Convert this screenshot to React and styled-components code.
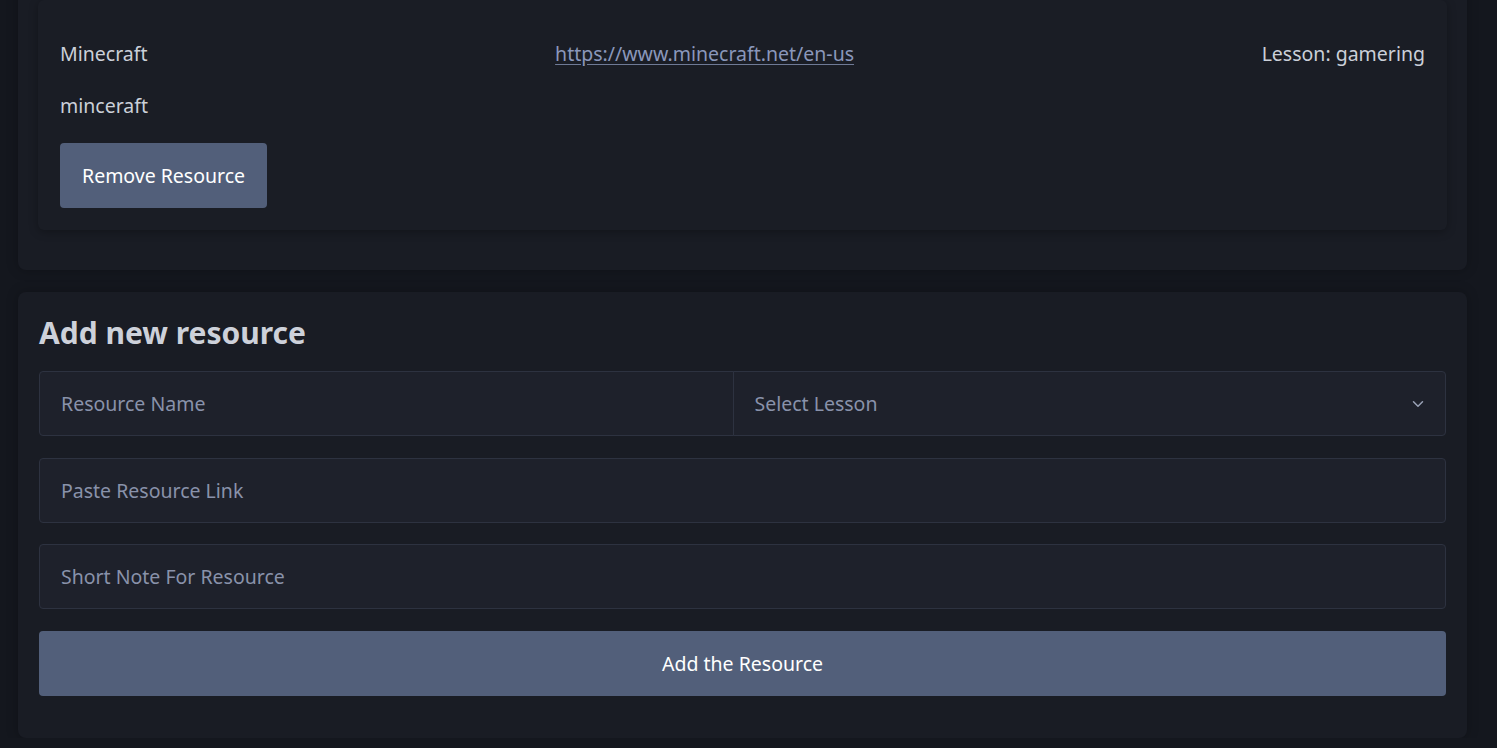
import React from 'react';
import styled, { createGlobalStyle } from 'styled-components';
import { FiChevronDown } from 'react-icons/fi';

const GlobalStyle = createGlobalStyle`
  html, body {
    margin: 0;
    background-color: #14171e;
    font-family: "Noto Sans", "Open Sans", sans-serif;
    overflow: hidden;
  }
`;

const Page = styled.div`
  display: flex;
  flex-direction: column;
  gap: 22px;
  padding: 0 30px 0 18px;
  margin-top: -20px;
`;

const Card = styled.section`
  background-color: #191c24;
  border-radius: 8px;
  padding: ${(p) => p.$padding};
  box-shadow: 0 0 12px rgba(0, 0, 0, 0.25);
`;

const ResourceItem = styled.div`
  display: flex;
  flex-direction: column;
  align-items: flex-start;
  gap: 22px;
  padding: 39px 22px 22px;
  border-radius: 6px;
  background-color: #1a1d25;
  box-shadow: 0 2px 10px rgba(0, 0, 0, 0.28);
`;

const ItemRow = styled.div`
  display: flex;
  justify-content: space-between;
  align-self: stretch;
  line-height: 30px;
`;

const Text = styled.span`
  color: #cbd0d9;
  font-size: 19.5px;
  line-height: 30px;
`;

const Link = styled.a`
  color: #8a97bb;
  font-size: 19.5px;
  text-decoration: underline;
  text-decoration-color: #6f7a96;
  text-underline-offset: 3px;
`;

const Button = styled.button`
  height: 65px;
  padding: 0 22px;
  border: none;
  border-radius: 4px;
  background-color: #525f7a;
  color: #ffffff;
  font-family: inherit;
  font-size: 19.5px;
  width: ${(p) => (p.$block ? '100%' : 'auto')};
  cursor: pointer;
`;

const Heading = styled.h2`
  margin: 0 0 18px;
  color: #cdd1da;
  font-size: 30px;
  font-weight: 700;
  line-height: 40px;
`;

const Form = styled.form`
  display: flex;
  flex-direction: column;
  gap: 21.5px;
`;

const InputGroup = styled.div`
  display: grid;
  grid-template-columns: 695fr 713fr;
`;

const Field = styled.div`
  position: relative;
  display: flex;
  align-items: center;
  height: 65px;
  box-sizing: border-box;
  padding: 0 21px;
  background-color: #1e212b;
  border: 1px solid #2d3240;
  border-radius: ${(p) => p.$radius || '4px'};
  margin-left: ${(p) => (p.$joined ? '-1px' : '0')};
  color: #8992aa;
  font-size: 19.5px;
`;

const Chevron = styled(FiChevronDown)`
  position: absolute;
  right: 18px;
  width: 18px;
  height: 18px;
  color: #9aa2b6;
`;

export default function App() {
  return (
    <>
      <GlobalStyle />
      <Page>
        <Card $padding="20px 20px 40px">
          <ResourceItem>
            <ItemRow>
              <Text>Minecraft</Text>
              <Link href="#">https://www.minecraft.net/en-us</Link>
              <Text>Lesson: gamering</Text>
            </ItemRow>
            <Text>minceraft</Text>
            <Button type="button">Remove Resource</Button>
          </ResourceItem>
        </Card>

        <Card $padding="21px 21px 42px">
          <Heading>Add new resource</Heading>
          <Form onSubmit={(e) => e.preventDefault()}>
            <InputGroup>
              <Field $radius="4px 0 0 4px">Resource Name</Field>
              <Field $radius="0 4px 4px 0" $joined>
                Select Lesson
                <Chevron />
              </Field>
            </InputGroup>
            <Field>Paste Resource Link</Field>
            <Field>Short Note For Resource</Field>
            <Button type="submit" $block>Add the Resource</Button>
          </Form>
        </Card>
      </Page>
    </>
  );
}
